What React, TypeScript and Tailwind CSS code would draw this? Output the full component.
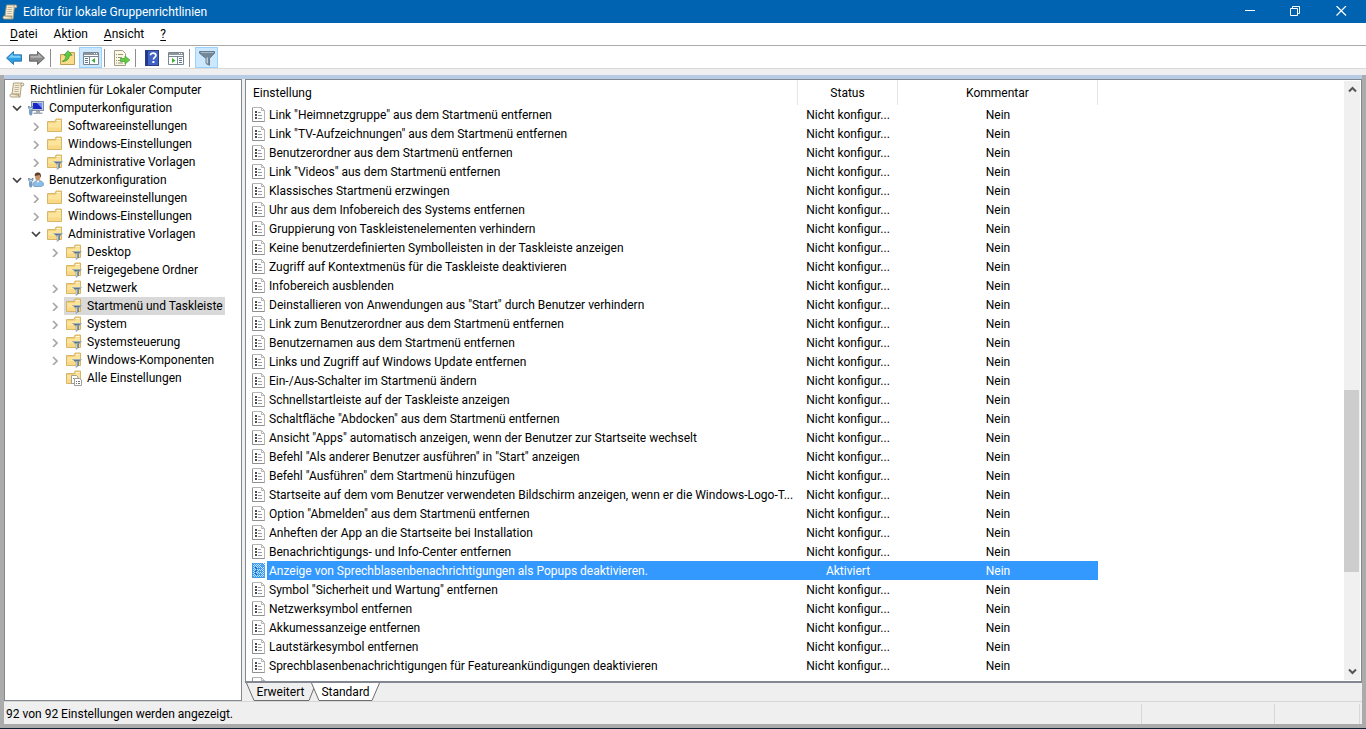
import { useState, type ReactNode } from 'react';

type IconName = 'scroll' | 'computer' | 'user' | 'folder' | 'folderFilter' | 'folderPages';

interface TreeNode {
  id: string;
  label: string;
  icon: IconName;
  open?: boolean;
  children?: TreeNode[];
  expandable?: boolean;
}

interface Policy {
  name: string;
  state: string;
  comment: string;
}

const TREE: TreeNode = {
  id: 'root',
  label: 'Richtlinien für Lokaler Computer',
  icon: 'scroll',
  open: true,
  children: [
    {
      id: 'computer',
      label: 'Computerkonfiguration',
      icon: 'computer',
      open: true,
      expandable: true,
      children: [
        { id: 'c-soft', label: 'Softwareeinstellungen', icon: 'folder', expandable: true },
        { id: 'c-win', label: 'Windows-Einstellungen', icon: 'folder', expandable: true },
        { id: 'c-adm', label: 'Administrative Vorlagen', icon: 'folderFilter', expandable: true },
      ],
    },
    {
      id: 'user',
      label: 'Benutzerkonfiguration',
      icon: 'user',
      open: true,
      expandable: true,
      children: [
        { id: 'u-soft', label: 'Softwareeinstellungen', icon: 'folder', expandable: true },
        { id: 'u-win', label: 'Windows-Einstellungen', icon: 'folder', expandable: true },
        {
          id: 'u-adm',
          label: 'Administrative Vorlagen',
          icon: 'folderFilter',
          open: true,
          expandable: true,
          children: [
            { id: 'desktop', label: 'Desktop', icon: 'folderFilter', expandable: true },
            { id: 'shared', label: 'Freigegebene Ordner', icon: 'folderFilter' },
            { id: 'network', label: 'Netzwerk', icon: 'folderFilter', expandable: true },
            { id: 'start', label: 'Startmenü und Taskleiste', icon: 'folderFilter', expandable: true },
            { id: 'system', label: 'System', icon: 'folderFilter', expandable: true },
            { id: 'control', label: 'Systemsteuerung', icon: 'folderFilter', expandable: true },
            { id: 'components', label: 'Windows-Komponenten', icon: 'folderFilter', expandable: true },
            { id: 'all', label: 'Alle Einstellungen', icon: 'folderPages' },
          ],
        },
      ],
    },
  ],
};

const ACTIVE_POLICY = 'Anzeige von Sprechblasenbenachrichtigungen als Popups deaktivieren.';

const POLICIES: Policy[] = [
  'Link "Heimnetzgruppe" aus dem Startmenü entfernen',
  'Link "TV-Aufzeichnungen" aus dem Startmenü entfernen',
  'Benutzerordner aus dem Startmenü entfernen',
  'Link "Videos" aus dem Startmenü entfernen',
  'Klassisches Startmenü erzwingen',
  'Uhr aus dem Infobereich des Systems entfernen',
  'Gruppierung von Taskleistenelementen verhindern',
  'Keine benutzerdefinierten Symbolleisten in der Taskleiste anzeigen',
  'Zugriff auf Kontextmenüs für die Taskleiste deaktivieren',
  'Infobereich ausblenden',
  'Deinstallieren von Anwendungen aus "Start" durch Benutzer verhindern',
  'Link zum Benutzerordner aus dem Startmenü entfernen',
  'Benutzernamen aus dem Startmenü entfernen',
  'Links und Zugriff auf Windows Update entfernen',
  'Ein-/Aus-Schalter im Startmenü ändern',
  'Schnellstartleiste auf der Taskleiste anzeigen',
  'Schaltfläche "Abdocken" aus dem Startmenü entfernen',
  'Ansicht "Apps" automatisch anzeigen, wenn der Benutzer zur Startseite wechselt',
  'Befehl "Als anderer Benutzer ausführen" in "Start" anzeigen',
  'Befehl "Ausführen" dem Startmenü hinzufügen',
  'Startseite auf dem vom Benutzer verwendeten Bildschirm anzeigen, wenn er die Windows-Logo-T...',
  'Option "Abmelden" aus dem Startmenü entfernen',
  'Anheften der App an die Startseite bei Installation',
  'Benachrichtigungs- und Info-Center entfernen',
  ACTIVE_POLICY,
  'Symbol "Sicherheit und Wartung" entfernen',
  'Netzwerksymbol entfernen',
  'Akkumessanzeige entfernen',
  'Lautstärkesymbol entfernen',
  'Sprechblasenbenachrichtigungen für Featureankündigungen deaktivieren',
].map((name) => ({
  name,
  state: name === ACTIVE_POLICY ? 'Aktiviert' : 'Nicht konfigur...',
  comment: 'Nein',
}));

const LEVEL_PADDING = ['pl-[2px]', 'pl-[4px]', 'pl-[23px]', 'pl-[42px]'];

function Svg({ children }: { children: ReactNode }) {
  return (
    <svg className="w-4 h-4 shrink-0" viewBox="0 0 16 16" fill="none" aria-hidden="true">
      {children}
    </svg>
  );
}

function ScrollIcon() {
  return (
    <Svg>
      <path d="M4.5 1h9.2c1.2 0 1.6 1.8.6 2.8h-2L11 15H2.2C.6 15 .5 12 2.2 12H3z" fill="#f3ebd3" stroke="#a39775" strokeWidth=".9" />
      <path d="M12.3 3.8c-.8-.6-.8-2 .3-2.5" stroke="#8f8468" strokeWidth=".8" />
      <path d="M3 12h7.2c-1 .8-.8 2.4.3 3" fill="#d8c9a2" stroke="#8f8468" strokeWidth=".8" />
      <path d="M5.7 3.5h4.6M5.5 5.5H10M5.3 7.5h4.6M5.1 9.5h4.5" stroke="#b5aa8c" strokeWidth=".8" />
    </Svg>
  );
}

function Wrench() {
  return (
    <>
      <path d="M.7 6v2.200l1 1V14c0 1.400 2.200 1.400 2.200 0V9.200l1-1V6L3.800 7.300h-2z" fill="#c3daee" stroke="#4a7299" strokeWidth=".8" />
      <path d="M2.800 10v4" stroke="#3f78ad" strokeWidth=".8" />
    </>
  );
}

function ComputerIcon() {
  return (
    <Svg>
      <rect x="3.500" y="1.500" width="12" height="9" fill="#c3cad6" stroke="#8390a3" />
      <rect x="5" y="3" width="9" height="6" fill="#1626c4" />
      <path d="M9 3h5v5.500z" fill="#6f8cf0" />
      <path d="M8 11h4v1.500h2.500V14H5.500v-1.500H8z" fill="#a3adba" />
      <Wrench />
    </Svg>
  );
}

function UserIcon() {
  return (
    <Svg>
      <path d="M5 13c0-2.500 2-4.200 4-4.500h2c2.600.2 4.500 2 4.500 3.500 0 2-1.500 2.500-3.500 2.500H6z" fill="#8dbde6" stroke="#5b8fbc" strokeWidth=".7" />
      <path d="m8.500 8.500 1.300 2.600 1.700-2.600z" fill="#fff" />
      <ellipse cx="9.800" cy="4.800" rx="2.700" ry="3.700" fill="#c89468" />
      <path d="M6.800 4.200C6.600 1 8 .4 9.800.4c2.200 0 3.500 1.200 3.100 4.600-.6 1-.8-1.300-1.300-2-1.500.5-3.300.2-4.800 1.200z" fill="#5b4030" />
      <Wrench />
    </Svg>
  );
}

function FolderShape() {
  return (
    <>
      <path d="M.5 3.500h7.500l1-2.500h5.500v12.500H.5z" fill="#f0d079" stroke="#cfa954" strokeWidth=".8" />
      <path d="M9.700 2h4v1.300h-4z" fill="#fff8dd" />
      <path d="M1.200 5h7.300l1.200-1.200h4.300V13H1.200z" fill="#fde49c" />
      <path d="M1.200 9.500h12.800V13H1.200z" fill="#f9d985" />
    </>
  );
}

function FolderIcon() {
  return (
    <Svg>
      <FolderShape />
    </Svg>
  );
}

function FolderFilterIcon() {
  return (
    <Svg>
      <FolderShape />
      <path d="M6 7h10l-3.500 3.500V14l-2.700 2v-5.500z" fill="#7d919f" />
      <path d="M7 7.500h8" stroke="#9fb0bb" />
      <path d="M8.300 8.500h5" stroke="#5f7484" />
      <path d="M10.800 9.500v5" stroke="#dbe6ec" />
      <path d="M12.200 10v4" stroke="#4f6475" strokeWidth=".8" />
    </Svg>
  );
}

function FolderPagesIcon() {
  return (
    <Svg>
      <FolderShape />
      <path d="M5.500 5.500h5l1.500 1.500v6.500H5.500z" fill="#fff" stroke="#8b8b8b" strokeWidth=".8" />
      <path d="M8.500 8.500h5L15.500 10v5.500h-7z" fill="#fff" stroke="#888" strokeWidth=".8" />
      <path d="M7 8.500h1M10 11.500h1M12 11.500h2M10 13.500h1M12 13.500h2" stroke="#666" strokeWidth=".9" />
    </Svg>
  );
}

function TreeIcon({ name }: { name: IconName }) {
  switch (name) {
    case 'scroll':
      return <ScrollIcon />;
    case 'computer':
      return <ComputerIcon />;
    case 'user':
      return <UserIcon />;
    case 'folderFilter':
      return <FolderFilterIcon />;
    case 'folderPages':
      return <FolderPagesIcon />;
    default:
      return <FolderIcon />;
  }
}

function PolicyIcon({ selected }: { selected: boolean }) {
  return (
    <svg className="w-[13px] h-[15px] shrink-0" viewBox="0 0 13 15" fill="none" aria-hidden="true">
      <path d="M.5.500h9l3 3v11H.5z" fill={selected ? '#c4e4fb' : '#fff'} stroke={selected ? '#6fa8d6' : '#b5b5b5'} />
      <path d="M9.500.500v3h3" stroke={selected ? '#6fa8d6' : '#b5b5b5'} />
      <path d="M.5 1v13.500h12" stroke={selected ? '#4f94cc' : '#909090'} />
      <path d="M3 4h2v2H3zM3 7h2v2H3zM3 10h2v2H3z" fill={selected ? '#1f5f93' : '#4a4a4a'} />
      <path d="M6 5.500h3M6 8.500h4M6 11.500h4" stroke={selected ? '#4f94cc' : '#9a9aa6'} />
      {selected && (
        <>
          <defs>
            <pattern id="dither" width="2" height="2" patternUnits="userSpaceOnUse">
              <path d="M0 0h1v1H0zM1 1h1v1H1z" fill="#3399ff" />
            </pattern>
          </defs>
          <path d="M0 0h13v15H0z" fill="url(#dither)" />
        </>
      )}
    </svg>
  );
}

function Chevron({ open }: { open: boolean }) {
  return (
    <svg className="w-[10px] h-[10px]" viewBox="0 0 10 10" fill="none" aria-hidden="true">
      {open ? (
        <path d="m1 3 4 4 4-4" stroke="#404040" strokeWidth="1.700" />
      ) : (
        <path d="m3 2 4 4-4 4" stroke="#a6a6a6" strokeWidth="1.700" />
      )}
    </svg>
  );
}

interface TreeItemProps {
  node: TreeNode;
  level: number;
  selectedId: string;
  onSelect: (id: string) => void;
}

function TreeItem({ node, level, selectedId, onSelect }: TreeItemProps) {
  const [open, setOpen] = useState(!!node.open);

  return (
    <li>
      <div className={`flex h-[18px] ${LEVEL_PADDING[level]}`}>
        {level > 0 && (
          <div className="w-[17px] shrink-0 flex">
            {node.expandable && (
              <button
                className="w-[15px] flex items-center justify-center"
                onClick={() => setOpen(!open)}
                aria-label={node.label}
                aria-expanded={open}
              >
                <Chevron open={open} />
              </button>
            )}
          </div>
        )}
        <button
          onClick={() => onSelect(node.id)}
          className={`flex items-center gap-[5px] px-[2px] whitespace-nowrap ${
            selectedId === node.id ? 'bg-[#d9d9d9]' : ''
          }`}
        >
          <TreeIcon name={node.icon} />
          {node.label}
        </button>
      </div>
      {open && node.children && (
        <ul>
          {node.children.map((child) => (
            <TreeItem key={child.id} node={child} level={level + 1} selectedId={selectedId} onSelect={onSelect} />
          ))}
        </ul>
      )}
    </li>
  );
}

function TitleBar() {
  return (
    <header className="h-[23px] shrink-0 flex items-center bg-[#0063b1] text-white px-[2px]">
      <ScrollIcon />
      <h1 className="flex-1 pl-[5px]">Editor für lokale Gruppenrichtlinien</h1>
      <button className="w-[46px] h-full flex items-center justify-center" aria-label="Minimieren">
        <svg className="w-[11px] h-[11px]" viewBox="0 0 11 11" fill="none">
          <path d="M1 4.500h10" stroke="#fff" />
        </svg>
      </button>
      <button className="w-[46px] h-full flex items-center justify-center" aria-label="Verkleinern">
        <svg className="w-[11px] h-[11px]" viewBox="0 0 11 11" fill="none">
          <path d="M.5 2.500h7v7h-7zM2.500 2.500v-2h7v7h-2" stroke="#fff" />
        </svg>
      </button>
      <button className="w-[46px] h-full flex items-center justify-center" aria-label="Schließen">
        <svg className="w-[11px] h-[11px]" viewBox="0 0 11 11" fill="none">
          <path d="m.5 0 9.500 9.500M10 0 .5 9.500" stroke="#fff" strokeWidth="1.200" />
        </svg>
      </button>
    </header>
  );
}

function MenuBar() {
  return (
    <nav className="h-[23px] shrink-0 flex items-center gap-4 bg-white border-b border-[#ababab] pl-[10px]">
      <button><u className="underline-offset-2">D</u>atei</button>
      <button>Ak<u className="underline-offset-2">t</u>ion</button>
      <button><u className="underline-offset-2">A</u>nsicht</button>
      <button><u className="underline-offset-2">?</u></button>
    </nav>
  );
}

function ToolButton({ label, active, children }: { label: string; active?: boolean; children: ReactNode }) {
  return (
    <button
      aria-label={label}
      className={`w-[23px] h-full flex items-center justify-center border ${
        active ? 'bg-[#cce8ff] border-[#99d1ff]' : 'border-transparent'
      }`}
    >
      {children}
    </button>
  );
}

function Separator() {
  return <div className="w-px h-[18px] ml-[2px] mr-[5px] bg-[#8d8d8d]" />;
}

function Toolbar() {
  return (
    <div className="h-[23px] shrink-0 flex items-center bg-white border-b border-[#d9d9d9] pt-px pl-[2px]">
      <ToolButton label="Zurück">
        <Svg>
          <path d="M.5 8 7.500 1.500v3.300h8v6.400h-8v3.300z" fill="#2a9fe4" stroke="#2a6fa8" strokeWidth=".9" />
          <path d="M2.300 7.800 6.700 3.700v2.100h7.800v2z" fill="#7fd0f8" />
        </Svg>
      </ToolButton>
      <ToolButton label="Vorwärts">
        <Svg>
          <path d="M15.500 8 8.500 1.500v3.300h-8v6.400h8v3.300z" fill="#8a8a8a" stroke="#5a5a5a" strokeWidth=".9" />
          <path d="M13.700 7.800 9.300 3.700v2.100H1.500v2z" fill="#b5b5b5" />
        </Svg>
      </ToolButton>
      <Separator />
      <ToolButton label="Eine Ebene nach oben">
        <Svg>
          <path d="M.5 4.500h8l1-2h5v12H.5z" fill="#f6d57e" stroke="#b9954a" strokeWidth=".9" />
          <path d="M1 6.500h13V14H1z" fill="#fbdc88" />
          <path d="M2 11.500C5 10.500 6 8 6 5.200H4L8 .7l4 4.500H9.300C9.300 9 7 11.300 2 11.500z" fill="#5fc948" stroke="#3a9330" strokeWidth=".7" />
        </Svg>
      </ToolButton>
      <ToolButton label="Konsolenstruktur ein-/ausblenden" active>
        <Svg>
          <path d="M.5 2.500h15v12H.5z" fill="#fff" stroke="#7b8790" />
          <path d="M1 3h14v2H1z" fill="#8b979f" />
          <path d="M1 6.500h14M6.500 7v7" stroke="#7b8790" />
          <path d="M11 3.500h1M13 3.500h1" stroke="#fff" />
          <path d="M2 8.500h3M2 10.500h3M2 12.500h3" stroke="#5e7790" />
          <path d="M12 8v5L8.500 10.500z" fill="#3fae35" />
        </Svg>
      </ToolButton>
      <Separator />
      <ToolButton label="Liste exportieren">
        <Svg>
          <path d="M.5.500h8l3 3v12H.5z" fill="#fdf8e4" stroke="#a39c86" />
          <path d="M2 4.500h1M4 4.500h5M2 7.500h1M4 7.500h4M2 10.500h1M4 10.500h2M2 13h1M4 13h5" stroke="#9a9482" />
          <path d="M6.500 8.500h4.500V6L15.800 10 11 14v-2.500H6.500z" fill="#63cc44" stroke="#4ba339" strokeWidth=".8" />
        </Svg>
      </ToolButton>
      <Separator />
      <ToolButton label="Hilfe">
        <svg className="w-4 h-4" viewBox="0 0 16 16" aria-hidden="true">
          <rect x=".5" y=".5" width="13" height="15" fill="#3f62c4" stroke="#2a3d86" />
          <path d="M1 1h2v14H1z" fill="#22378f" />
          <path d="M5.500 5.300c0-3 5.400-3 5.400.1 0 2-2.500 2-2.500 4.200" fill="none" stroke="#fff" strokeWidth="1.700" />
          <rect x="7.400" y="11" width="2" height="2" fill="#fff" />
        </svg>
      </ToolButton>
      <ToolButton label="Aktionsbereich ein-/ausblenden">
        <Svg>
          <path d="M.5 2.500h15v12H.5z" fill="#fff" stroke="#7b8790" />
          <path d="M1 3h14v2H1z" fill="#8b979f" />
          <path d="M1 6.500h14M9.500 7v7" stroke="#7b8790" />
          <path d="M11 3.500h1M13 3.500h1" stroke="#fff" />
          <path d="M11 8.500h3M11 10.500h3M11 12.500h3" stroke="#5e7790" />
          <path d="M4 8v5l3.500-2.500z" fill="#3fae35" />
        </Svg>
      </ToolButton>
      <Separator />
      <ToolButton label="Filter" active>
        <Svg>
          <path d="M.5 1.500h15v1.700L10.500 8.500v6.800L7 13.500v-5L.5 3.200z" fill="#73899b" stroke="#566b7c" strokeWidth=".8" />
          <path d="M2 2.500h12.500" stroke="#a9bac7" />
          <path d="M8.200 7.500v6" stroke="#d5e0e8" strokeWidth="1.200" />
        </Svg>
      </ToolButton>
    </div>
  );
}

function PolicyTable() {
  const [selected, setSelected] = useState(ACTIVE_POLICY);

  return (
    <table className="w-[852px] table-fixed border-separate border-spacing-0 whitespace-nowrap">
      <colgroup>
        <col className="w-[552px]" />
        <col className="w-[100px]" />
        <col className="w-[200px]" />
      </colgroup>
      <thead>
        <tr className="h-[25px]">
          <th className="p-0 pl-[7px] font-normal text-left border-r border-[#e5e5e5]">Einstellung</th>
          <th className="p-0 font-normal border-r border-[#e5e5e5]">Status</th>
          <th className="p-0 font-normal border-r border-[#e5e5e5]">Kommentar</th>
        </tr>
      </thead>
      <tbody>
        {POLICIES.map((policy) => {
          const active = policy.name === selected;
          const cell = active ? 'bg-[#3399ff] text-white' : '';
          return (
            <tr key={policy.name} className="h-[19px] cursor-default" onClick={() => setSelected(policy.name)}>
              <td className="p-0 pl-[6px]">
                <div className="flex items-center gap-[2px]">
                  <PolicyIcon selected={active} />
                  <span className={`flex-1 h-[19px] leading-[20px] pl-[2px] ${cell}`}>{policy.name}</span>
                </div>
              </td>
              <td className={`p-0 text-center ${cell}`}>{policy.state}</td>
              <td className={`p-0 text-center ${cell}`}>{policy.comment}</td>
            </tr>
          );
        })}
        <tr className="h-[19px]">
          <td className="p-0 pl-[6px]">
            <PolicyIcon selected={false} />
          </td>
          <td className="p-0" />
          <td className="p-0" />
        </tr>
      </tbody>
    </table>
  );
}

function ScrollBar() {
  return (
    <div className="w-[16px] shrink-0 my-px mr-px flex flex-col bg-[#f0f0f0]">
      <button className="h-[17px] flex items-center justify-center" aria-label="Nach oben">
        <svg className="w-[9px] h-[9px]" viewBox="0 0 9 9" fill="none">
          <path d="m1 6.500 3.500-3.500L8 6.500" stroke="#555" strokeWidth="2" />
        </svg>
      </button>
      <div className="grow-[292]" />
      <div className="grow-[182] mr-px bg-[#cdcdcd]" />
      <div className="grow-[91]" />
      <button className="h-[17px] flex items-center justify-center" aria-label="Nach unten">
        <svg className="w-[9px] h-[9px]" viewBox="0 0 9 9" fill="none">
          <path d="m1 2.500 3.500 3.500L8 2.500" stroke="#555" strokeWidth="2" />
        </svg>
      </button>
    </div>
  );
}

function ViewTabs() {
  return (
    <div className="h-[18px] shrink-0 flex pl-px" role="tablist">
      <button role="tab" aria-selected={false} className="relative w-[69px] h-full">
        <svg className="absolute inset-0 w-full h-full" viewBox="0 0 69 18" fill="none" aria-hidden="true">
          <path d="M.5 0 8 17.500h55L68 5" stroke="#6e6e6e" />
        </svg>
        <span className="relative">Erweitert</span>
      </button>
      <button role="tab" aria-selected className="relative w-[69px] h-full -ml-1">
        <svg className="absolute inset-0 w-full h-full" viewBox="0 0 69 18" fill="none" aria-hidden="true">
          <path d="M.5 0 8 17.500h53L68.500 0" fill="#fff" stroke="#6e6e6e" />
        </svg>
        <span className="relative">Standard</span>
      </button>
    </div>
  );
}

export default function App() {
  const [selectedNode, setSelectedNode] = useState('start');

  return (
    <div className="h-screen flex flex-col overflow-hidden bg-[#efefef] text-black text-[12px] leading-[16px] font-['Roboto',sans-serif] border-b border-[#0b2236]">
      <TitleBar />
      <MenuBar />
      <Toolbar />
      <div className="h-[6px] shrink-0" />

      <div className="flex-1 min-h-0 flex flex-col border-x-4 border-b-4 border-[#ababab]">
        <div className="h-1 shrink-0 bg-[#b8cde5]" />
        <main className="flex-1 min-h-0 flex gap-[3px]">
          {/* Console tree */}
          <aside className="w-[238px] shrink-0 bg-white border border-[#828790] pt-px overflow-hidden">
            <ul>
              <TreeItem node={TREE} level={0} selectedId={selectedNode} onSelect={setSelectedNode} />
            </ul>
          </aside>

          {/* Settings list */}
          <section className="flex-1 min-w-0 flex flex-col">
            <div className="flex-1 min-h-0 flex bg-white border border-b-2 border-[#828790]">
              <div className="flex-1 min-w-0 overflow-hidden">
                <PolicyTable />
              </div>
              <ScrollBar />
            </div>
            <ViewTabs />
          </section>
        </main>

        <footer className="h-[23px] shrink-0 flex items-center border-t border-[#d7d7d7] pt-px px-[2px]">
          <p className="flex-1">92 von 92 Einstellungen werden angezeigt.</p>
          <div className="w-[133px] h-5 border-l border-[#d7d7d7]" />
          <div className="w-[86px] h-5 border-x border-[#d7d7d7]" />
        </footer>
      </div>
    </div>
  );
}
